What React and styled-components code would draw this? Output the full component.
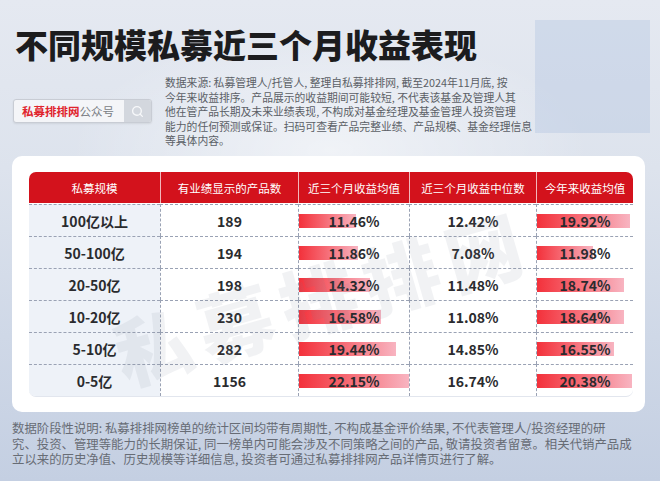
import React from "react";
import styled, { createGlobalStyle } from "styled-components";
import { Search } from "lucide-react";

const GlobalStyle = createGlobalStyle`
  html, body {
    margin: 0;
    padding: 0;
  }
  body {
    font-family: "Noto Sans CJK SC", "Noto Sans", sans-serif;
    background: #d5dce8;
  }
`;

const Page = styled.div`
  width: 660px;
  height: 481px;
  box-sizing: border-box;
  padding-left: 12px;
  overflow: hidden;
  background:
    radial-gradient(ellipse 260px 120px at 330px 150px, rgba(255, 255, 255, 0.55), rgba(255, 255, 255, 0)),
    linear-gradient(180deg, #e5e9f1 0%, #dde3ed 35%, #cfd8e7 70%, #c4cfe2 100%);
`;

const Top = styled.div`
  display: flex;
  height: 156px;
`;

const Head = styled.div`
  display: flex;
  flex-direction: column;
`;

const Title = styled.h1`
  margin: 24px 0 0 3px;
  font-size: 33px;
  line-height: 40px;
  font-weight: 900;
  color: #1c1c1e;
`;

const InfoRow = styled.div`
  display: flex;
  align-items: center;
  gap: 13px;
  margin-top: 11px;
`;

const SearchBox = styled.div`
  display: flex;
  height: 22px;
  width: 137px;
  margin-left: 1px;
  border: 1px solid #c8ccd4;
  border-radius: 3px;
  overflow: hidden;
  background: #f4f5f8;
  box-shadow: 0 1px 2px rgba(0, 0, 0, 0.08);
`;

const SearchText = styled.div`
  flex: 1;
  display: flex;
  align-items: center;
  padding-left: 8px;
  font-size: 11.5px;
  color: #7a7d84;
  white-space: nowrap;
`;

const Brand = styled.span`
  color: #e0242d;
  font-weight: 700;
`;

const SearchBtn = styled.div`
  width: 27px;
  display: flex;
  align-items: center;
  justify-content: center;
  background: #d3d7de;
`;

const Note = styled.div`
  font-size: 10.8px;
  line-height: 14.5px;
  color: #5b5f66;
  white-space: nowrap;
`;

const QrSlot = styled.div`
  margin: 20px 10px 0 auto;
  width: 115px;
  height: 113px;
  background: rgba(176, 194, 224, 0.38);
`;

const Card = styled.div`
  position: relative;
  width: 633px;
  height: 256px;
  box-sizing: border-box;
  padding: 16px 0 0 17px;
  background: #fff;
  border-radius: 10px;
  overflow: hidden;
`;

const Table = styled.div`
  display: grid;
  grid-template-columns: 131px 138px 111px 127px 97px;
  grid-auto-rows: 32px;
  width: 604px;
  border-radius: 7px;
  overflow: hidden;
  border-bottom: 1px solid #e2e6ee;
`;

const HeadCell = styled.div`
  height: 31px;
  display: flex;
  align-items: center;
  justify-content: center;
  background: #d3121c;
  color: #fff;
  font-size: 11.5px;
  border-left: ${(p) => (p.$first ? "none" : "1px solid rgba(255,255,255,0.7)")};
`;

const Cell = styled.div`
  display: flex;
  align-items: center;
  justify-content: center;
  font-size: 14px;
  font-weight: 700;
  color: #2a2b2e;
  border-top: 1px dashed #9aa2b4;
  border-left: ${(p) => (p.$first ? "none" : "1px dashed #9aa2b4")};
  background-color: ${(p) => (p.$first ? "#eef2f8" : "transparent")};
  background-image: ${(p) =>
    p.$bar ? "linear-gradient(90deg, #f3313b 0%, #f66a74 45%, #f8b4c1 100%)" : "none"};
  background-repeat: no-repeat;
  background-position: left center;
`;

const Watermark = styled.div`
  position: absolute;
  left: 95px;
  top: 84px;
  transform: rotate(-16deg);
  font-size: 76px;
  font-weight: 900;
  letter-spacing: 10px;
  color: rgba(120, 130, 150, 0.1);
  white-space: nowrap;
  pointer-events: none;
`;

const Footer = styled.div`
  margin-top: 9px;
  font-size: 12.4px;
  line-height: 15.5px;
  color: #676c75;
  white-space: nowrap;
`;

const headers = ["私募规模", "有业绩显示的产品数", "近三个月收益均值", "近三个月收益中位数", "今年来收益均值"];

const rows = [
  ["100亿以上", 189, 11.46, 12.42, 19.92],
  ["50-100亿", 194, 11.86, 7.08, 11.98],
  ["20-50亿", 198, 14.32, 11.48, 18.74],
  ["10-20亿", 230, 16.58, 11.08, 18.64],
  ["5-10亿", 282, 19.44, 14.85, 16.55],
  ["0-5亿", 1156, 22.15, 16.74, 20.38],
];

const fmt = (v) => `${v.toFixed(2)}%`;

export default function App() {
  return (
    <Page>
      <GlobalStyle />
      <Top>
        <Head>
          <Title>不同规模私募近三个月收益表现</Title>
          <InfoRow>
            <SearchBox>
              <SearchText>
                <Brand>私募排排网</Brand>公众号
              </SearchText>
              <SearchBtn>
                <Search size={13} color="#f7f8fa" strokeWidth={2.5} />
              </SearchBtn>
            </SearchBox>
            <Note>
              <div>数据来源: 私募管理人/托管人, 整理自私募排排网, 截至2024年11月底, 按</div>
              <div>今年来收益排序。产品展示的收益期间可能较短, 不代表该基金及管理人其</div>
              <div>他在管产品长期及未来业绩表现, 不构成对基金经理及基金管理人投资管理</div>
              <div>能力的任何预测或保证。扫码可查看产品完整业绩、产品规模、基金经理信息</div>
              <div>等具体内容。</div>
            </Note>
          </InfoRow>
        </Head>
        <QrSlot />
      </Top>

      <Card>
        <Table>
          {headers.map((h, i) => (
            <HeadCell key={h} $first={i === 0}>
              {h}
            </HeadCell>
          ))}
          {rows.map(([name, count, avg, med, ytd]) => (
            <React.Fragment key={name}>
              <Cell $first>{name}</Cell>
              <Cell>{count}</Cell>
              <Cell $bar style={{ backgroundSize: `${Math.round((avg / 22.15) * 110)}px 14px` }}>
                {fmt(avg)}
              </Cell>
              <Cell>{fmt(med)}</Cell>
              <Cell $bar style={{ backgroundSize: `${Math.round((ytd / 20.38) * 95)}px 14px` }}>
                {fmt(ytd)}
              </Cell>
            </React.Fragment>
          ))}
        </Table>
        <Watermark>私募排排网</Watermark>
      </Card>

      <Footer>
        <div>数据阶段性说明: 私募排排网榜单的统计区间均带有周期性, 不构成基金评价结果, 不代表管理人/投资经理的研</div>
        <div>究、投资、管理等能力的长期保证, 同一榜单内可能会涉及不同策略之间的产品, 敬请投资者留意。相关代销产品成</div>
        <div>立以来的历史净值、历史规模等详细信息, 投资者可通过私募排排网产品详情页进行了解。</div>
      </Footer>
    </Page>
  );
}
